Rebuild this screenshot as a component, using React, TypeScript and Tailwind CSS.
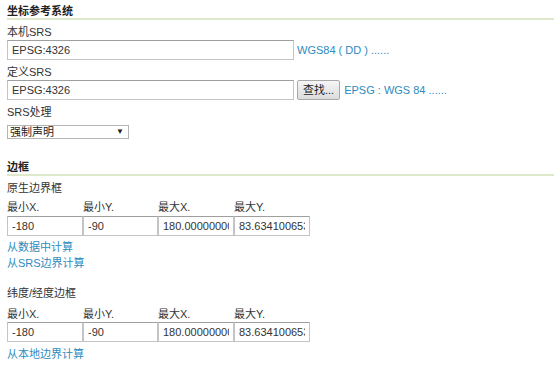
const font = { fontFamily: '"Liberation Sans", "Noto Sans CJK SC", sans-serif' };

const inputClass =
  'h-[20px] border border-[#c4c4c4] border-t-[#9f9f9f] bg-white px-[4px] text-[11px] text-[#333] outline-none';
const linkClass = 'text-[11px] text-[#2c8bbf] leading-[16px]';

function SectionTitle({ children, className = '' }: { children: string; className?: string }) {
  return (
    <div
      className={`border-b-2 border-[#dde9c9] text-[11px] font-bold leading-[13px] text-[#222] ${className}`}
    >
      {children}
    </div>
  );
}

function Label({ children, className = '' }: { children: string; className?: string }) {
  return <div className={`text-[11px] leading-[16px] text-[#333] ${className}`}>{children}</div>;
}

function BBox({ labelsMt, inputsMt }: { labelsMt: string; inputsMt: string }) {
  const cols = [
    { label: '最小X.', value: '-180' },
    { label: '最小Y.', value: '-90' },
    { label: '最大X.', value: '180.0000000000' },
    { label: '最大Y.', value: '83.6341006530' },
  ];
  return (
    <div className="w-[303px]">
      <div className={`grid grid-cols-[76px_75px_76px_76px] ${labelsMt}`}>
        {cols.map((c) => (
          <Label key={c.label}>{c.label}</Label>
        ))}
      </div>
      <div className={`grid grid-cols-[76px_75px_76px_76px] ${inputsMt}`}>
        {cols.map((c) => (
          <input key={c.label} readOnly value={c.value} className={`${inputClass} w-full min-w-0`} />
        ))}
      </div>
    </div>
  );
}

export default function App() {
  return (
    <div className="min-h-[371px] w-[554px] bg-white pl-[7px] pt-[5px]" style={font}>
      <SectionTitle>坐标参考系统</SectionTitle>

      <Label className="mt-[4px]">本机SRS</Label>
      <div className="flex items-center">
        <input readOnly value="EPSG:4326" className={`${inputClass} w-[287px]`} />
        <a className={`${linkClass} ml-[3px]`}>WGS84 ( DD ) ......</a>
      </div>

      <Label className="mt-[4px]">定义SRS</Label>
      <div className="flex items-center">
        <input readOnly value="EPSG:4326" className={`${inputClass} w-[287px]`} />
        <button className="ml-[3px] h-[20px] rounded-[2px] border border-[#a8a8a8] bg-gradient-to-b from-[#f6f6f6] to-[#dcdcdc] px-[5px] text-[11px] leading-[16px] text-[#222]">
          查找...
        </button>
        <a className={`${linkClass} ml-[4px]`}>EPSG : WGS 84 ......</a>
      </div>

      <Label className="mt-[4px]">SRS处理</Label>
      <div className="mt-[5px] flex h-[14px] w-[122px] items-center justify-between border border-[#b5b5b5] bg-white pl-[2px] pr-[4px] text-[11px] leading-[12px] text-[#222]">
        <span>强制声明</span>
        <span className="text-[8px]">▼</span>
      </div>

      <SectionTitle className="mt-[22px]">边框</SectionTitle>
      <Label className="mt-[4px]">原生边界框</Label>
      <BBox labelsMt="mt-[3px]" inputsMt="mt-[1px]" />
      <div className="mt-[3px] flex flex-col items-start">
        <a className={linkClass}>从数据中计算</a>
        <a className={linkClass}>从SRS边界计算</a>
      </div>

      <Label className="mt-[14px]">纬度/经度边框</Label>
      <BBox labelsMt="mt-[5px]" inputsMt="mt-0" />
      <div className="mt-[4px] flex flex-col items-start">
        <a className={linkClass}>从本地边界计算</a>
      </div>
    </div>
  );
}
